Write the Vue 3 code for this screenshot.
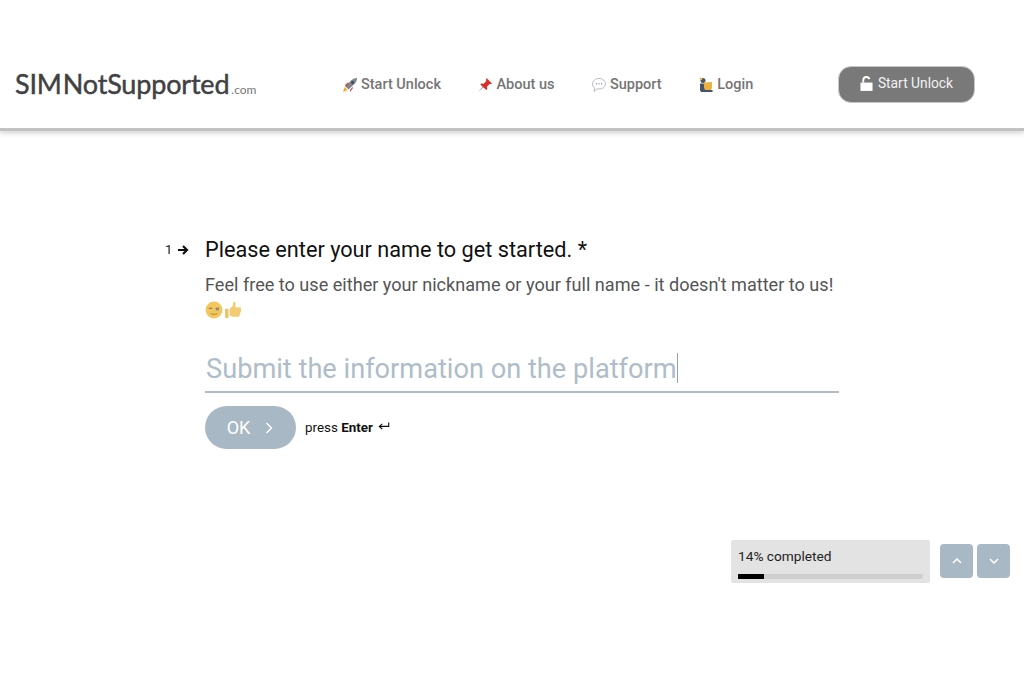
<script setup>
import { ref } from 'vue'

const links = [
  { label: 'Start Unlock', icon: 'rocket' },
  { label: 'About us', icon: 'pin' },
  { label: 'Support', icon: 'bubble' },
  { label: 'Login', icon: 'person' }
]
const progress = ref(14)
</script>

<template>
  <div class="page">
    <header class="topbar">
      <a class="logo">SIM<span class="logo-rest">NotSupported</span><small>.com</small></a>
      <nav class="nav">
        <a v-for="link in links" :key="link.label" class="nav-link">
          <svg class="emoji" viewBox="0 0 16 16">
            <template v-if="link.icon === 'rocket'">
              <path d="M1 15l1.500-5 3 3z" fill="#f5a623" />
              <path d="M3.500 9.500L9 3.500C10.800 1.800 13 1 15 1c0 2-.8 4.200-2.500 6l-6 5.500z" fill="#7d8791" />
              <path d="M3 8l3-2.500 1 .5-3 4zM8 13l2.500-3 .5 1-3 4z" fill="#d8402e" />
              <circle cx="10.500" cy="5.500" r="1.400" fill="#3b4650" />
            </template>
            <template v-else-if="link.icon === 'pin'">
              <path d="M1 15l5.500-6.500 1 1z" fill="#9aa3ab" />
              <path d="M9.500 1l5.500 5.500-1.500.8-.8-.3-2.700 2.600.3 2.400-1 1L3.300 7.500l1-1 2.400.3 2.600-2.700-.3-.8z" fill="#d9302c" />
            </template>
            <template v-else-if="link.icon === 'bubble'">
              <path d="M8 1.500c3.700 0 6.500 2.300 6.500 5.300S11.700 12 8 12c-.7 0-1.300 0-1.900-.2L3 14.500l.6-3.700C2.300 9.900 1.500 8.500 1.500 6.800 1.500 3.800 4.300 1.500 8 1.500z" fill="#fff" stroke="#b4bac0" />
              <circle cx="5.500" cy="6.800" r=".7" fill="#8c949c" />
              <circle cx="8" cy="6.800" r=".7" fill="#8c949c" />
              <circle cx="10.500" cy="6.800" r=".7" fill="#8c949c" />
            </template>
            <template v-else>
              <circle cx="5" cy="3.500" r="2.500" fill="#4a5560" />
              <path d="M2 6.500h6v7H2z" fill="#4a5560" />
              <path d="M6 5.500l8-.5v5c0 2.500-2 4-4 4.500-2-.5-4-2-4-4.500z" fill="#eeb03e" />
              <path d="M2 13h12.500v2H3z" fill="#3f5570" />
              <circle cx="3" cy="1.800" r="1.400" fill="#f3bd4e" />
            </template>
          </svg>
          {{ link.label }}
        </a>
      </nav>
      <button class="cta">
        <svg class="lock" viewBox="0 0 14 16">
          <path d="M.5 7h13v9H.5z" fill="#fff" />
          <path d="M3.500 7V4.500a3.500 3.500 0 0 1 6.800-1.200" fill="none" stroke="#fff" stroke-width="2" />
        </svg>
        Start Unlock
      </button>
    </header>

    <main class="question">
      <div class="index">
        <span>1</span>
        <svg class="index-arrow" viewBox="0 0 12 12">
          <path d="M1 6h9M6 2l4 4-4 4" fill="none" stroke="#111" stroke-width="2.200" />
        </svg>
      </div>
      <div class="body">
        <h1>Please enter your name to get started. *</h1>
        <p class="hint">Feel free to use either your nickname or your full name - it doesn't matter to us!</p>
        <div class="hint-emoji">
          <svg viewBox="0 0 16 16">
            <circle cx="8" cy="8" r="7.500" fill="#f1c75e" />
            <path d="M3.500 6.500h3M9.500 6.500h3" stroke="#8f7a52" stroke-width="1.200" />
            <path d="M9.500 7.800h3" stroke="#7d93a8" stroke-width="1.200" />
            <path d="M5 11c2 1.200 4 1.200 6 0" fill="none" stroke="#b98a38" stroke-width="1" />
          </svg>
          <svg viewBox="0 0 16 16">
            <path d="M1 7h3v8H1z" fill="#edbf62" />
            <path d="M5 7l3-3V1.500C8 .5 10 .5 10.300 2.500L10 5.500h4c1.500 0 1.500 2 .8 2.500.6.700.4 1.700-.3 2 .3.800 0 1.600-.6 1.900.2 1-.3 2.100-1.400 2.100H8c-1.300 0-2-.6-3-.8z" fill="#f2cb72" />
          </svg>
        </div>
        <div class="field">
          <span class="placeholder">Submit the information on the platform</span><span class="caret"></span>
        </div>
        <div class="actions">
          <button class="ok">
            OK
            <svg viewBox="0 0 10 14"><path d="M2.500 2l5 5-5 5" fill="none" stroke="#fff" stroke-width="1.400" /></svg>
          </button>
          <span class="press">press <b>Enter</b></span>
          <svg class="enter" viewBox="0 0 14 10">
            <path d="M12.500 1v4.500H2M5 2.500L1.500 5.500 5 8.500" fill="none" stroke="#111" stroke-width="1.300" />
          </svg>
        </div>
      </div>
    </main>

    <footer class="footer">
      <div class="progress">
        <div class="progress-label">{{ progress }}% completed</div>
        <div class="track"><div class="fill" :style="{ width: progress + '%' }"></div></div>
      </div>
      <button class="step">
        <svg viewBox="0 0 10 6"><path d="M1 5l4-4 4 4" fill="none" stroke="#fff" stroke-width="1.500" /></svg>
      </button>
      <button class="step">
        <svg viewBox="0 0 10 6"><path d="M1 1l4 4 4-4" fill="none" stroke="#fff" stroke-width="1.500" /></svg>
      </button>
    </footer>
  </div>
</template>

<style scoped>
.page {
  height: 689px;
  overflow: hidden;
  background: #fff;
  font-family: Roboto, "Liberation Sans", sans-serif;
}

.topbar {
  height: 128px;
  box-sizing: border-box;
  display: flex;
  align-items: center;
  padding: 41px 49px 0 15px;
  background: #fff;
  box-shadow: 0 3px 0 #c2c2c2, 0 6px 4px #dcdcdc;
}

.logo {
  width: 327px;
  margin-top: -2px;
  font-family: Lato, sans-serif;
  font-size: 27px;
  font-weight: 400;
  letter-spacing: -0.18px;
  color: #3f4143;
  -webkit-text-stroke: 0.45px #3f4143;
}

.logo-rest {
  margin-left: 1px;
}

.logo small {
  margin-left: 2px;
  font-size: 12px;
  letter-spacing: 0;
  color: #77797b;
  -webkit-text-stroke: 0;
}

.nav {
  display: flex;
  gap: 36.500px;
  flex: 1;
}

.nav-link {
  display: flex;
  align-items: center;
  gap: 3px;
  font-size: 14.500px;
  font-weight: 500;
  color: #757575;
}

.emoji {
  width: 16px;
  height: 16px;
}

.cta {
  width: 137px;
  height: 37px;
  margin-top: -1px;
  padding: 0 0 2px;
  display: flex;
  align-items: center;
  justify-content: center;
  gap: 5px;
  border: 1px solid #c8c8c8;
  border-radius: 13px;
  background: #797979;
  color: #f2f2f2;
  font-family: inherit;
  font-size: 13.800px;
  font-weight: 400;
}

.lock {
  width: 13px;
  height: 15px;
}

.question {
  display: flex;
  padding: 109px 0 0 165px;
}

.index {
  width: 40px;
  height: 25px;
  display: flex;
  align-items: center;
  gap: 5px;
  font-size: 13px;
  color: #222;
}

.index-arrow {
  width: 12px;
  height: 12px;
}

.body {
  width: 634px;
}

h1 {
  margin: 0;
  font-size: 21.700px;
  line-height: 25px;
  font-weight: 400;
  color: #111;
}

.hint {
  margin: 10px 0 0;
  font-size: 18.100px;
  line-height: 25px;
  color: #555;
  white-space: nowrap;
}

.hint-emoji {
  display: flex;
  gap: 1px;
  height: 25px;
  align-items: center;
}

.hint-emoji svg {
  width: 18px;
  height: 18px;
}

.field {
  display: flex;
  align-items: center;
  height: 47px;
  margin-top: 22px;
  padding-left: 1px;
  border-bottom: 2px solid #aebdc9;
}

.placeholder {
  margin-top: 2px;
  font-size: 27.200px;
  color: #aebdc9;
}

.caret {
  width: 1px;
  height: 30px;
  background: #8fa3b3;
}

.actions {
  display: flex;
  align-items: center;
  margin-top: 13px;
}

.ok {
  width: 91px;
  height: 43px;
  display: flex;
  align-items: center;
  justify-content: center;
  gap: 14px;
  padding: 0;
  border: none;
  border-radius: 22px;
  background: #a9b8c5;
  color: #fff;
  font-family: inherit;
  font-size: 18px;
}

.ok svg {
  width: 10px;
  height: 14px;
}

.press {
  margin-left: 9px;
  font-size: 13.400px;
  color: #111;
}

.enter {
  width: 12px;
  height: 10px;
  margin: -3px 0 0 5px;
}

.footer {
  display: flex;
  align-items: center;
  margin-top: 91px;
  padding-left: 731px;
}

.progress {
  width: 199px;
  height: 43px;
  box-sizing: border-box;
  padding: 7px 7px 0;
  border-radius: 2px;
  background: #e3e3e3;
}

.progress-label {
  font-size: 13.700px;
  line-height: 18px;
  color: #222;
}

.track {
  height: 5px;
  margin-top: 9px;
  border-radius: 2px;
  background: #cfcfcf;
}

.fill {
  height: 100%;
  background: #000;
}

.step {
  width: 33px;
  height: 34px;
  margin: 0 0 1px 4px;
  padding: 0;
  display: flex;
  align-items: center;
  justify-content: center;
  border: none;
  border-radius: 4px;
  background: #a9b8c5;
}

.progress + .step {
  margin-left: 10px;
}

.step svg {
  width: 10px;
  height: 6px;
}
</style>
